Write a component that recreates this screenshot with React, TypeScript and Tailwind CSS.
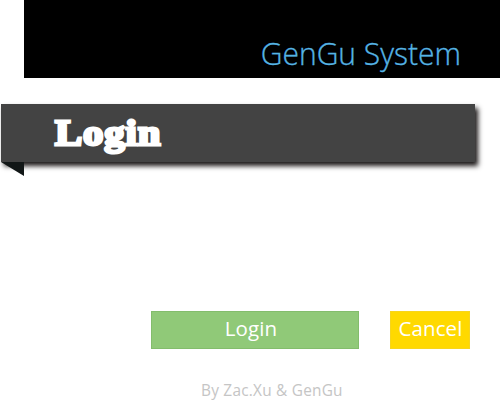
export default function App() {
  return (
    <main className="flex h-[400px] w-[500px] flex-col overflow-hidden bg-white font-['Open_Sans','Noto_Sans',sans-serif]">
      <header className="ml-6 flex h-[78px] shrink-0 justify-end bg-black pt-[32px] pr-[39px]">
        <h1 className="origin-right scale-x-[0.967] text-[31px] leading-[42px] font-light whitespace-nowrap text-[#55b4e5] [-webkit-text-stroke:0.35px_#55b4e5]">
          GenGu System
        </h1>
      </header>

      <section className="mt-[26px] ml-px h-[72px] w-[474px] shrink-0">
        <div className="h-[58px] bg-[#434343] pl-[54px] shadow-[3px_4px_5px_#1c1818]">
          <h2 className="origin-left scale-x-[1.13] font-['Liberation_Serif',serif] text-[36px] leading-[58px] font-bold tracking-[0.8px] text-white [-webkit-text-stroke:2.8px_white] [stroke-linejoin:round]">
            Login
          </h2>
        </div>
        <svg className="relative block h-[14px] w-[23px]" viewBox="0 0 23 14">
          <path d="M0 0H23V14Z" fill="#111616" />
        </svg>
      </section>

      <div className="mt-[135px] ml-[151px] flex shrink-0 gap-[31px]">
        <button className="h-[38px] w-[208px] border border-[#83bd6c] bg-[#90c978] pr-[8px] pb-[5px] text-[20.5px] leading-[30px] tracking-[0.1px] text-white">
          Login
        </button>
        <button className="h-[38px] w-[80px] border border-[#f7d51c] bg-[#ffd900] pb-[5px] pl-px text-[20.5px] leading-[30px] tracking-[0.1px] text-white">
          Cancel
        </button>
      </div>

      <footer className="mt-[32px] ml-[201px] text-[15.4px] leading-[20px] tracking-[0.23px] whitespace-nowrap text-[#c5c5c5]">
        By Zac.Xu &amp; GenGu
      </footer>
    </main>
  );
}
